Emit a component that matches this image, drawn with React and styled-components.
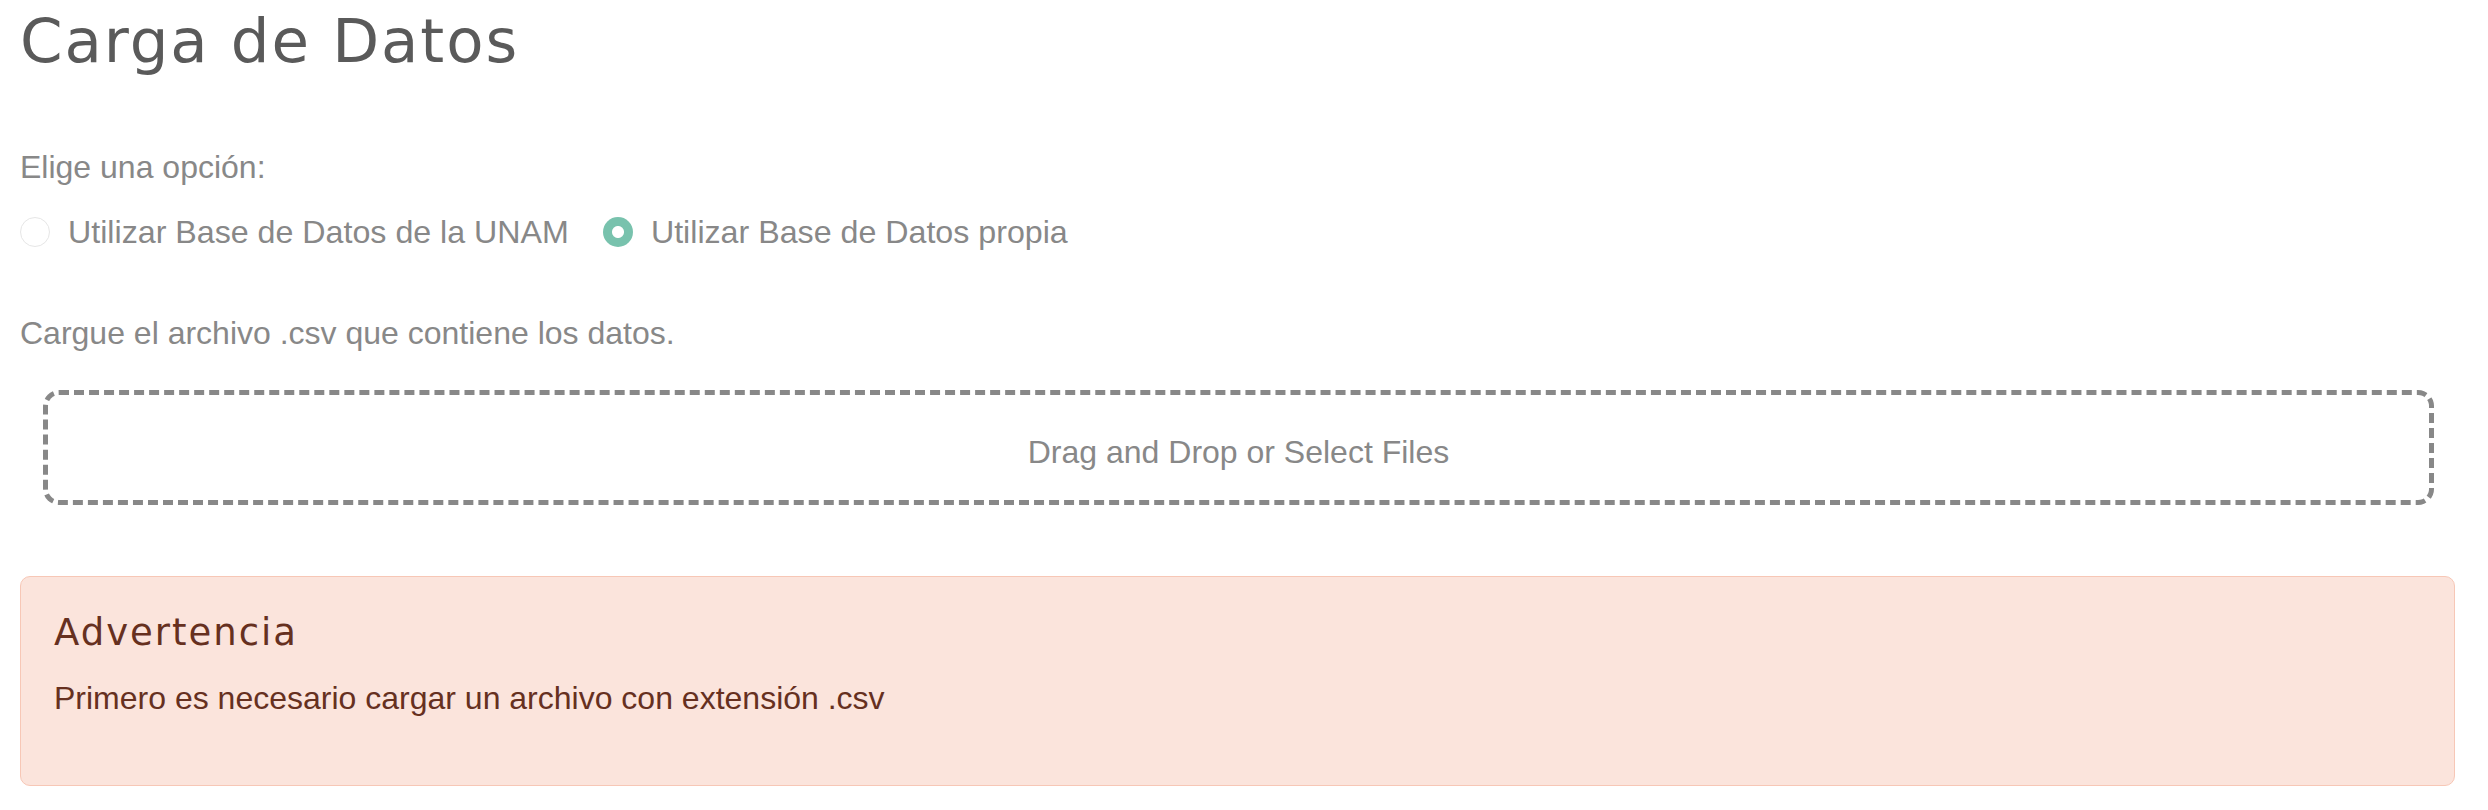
import React, { useState } from "react";
import styled, { createGlobalStyle } from "styled-components";

const GlobalStyle = createGlobalStyle`
  html, body { margin: 0; padding: 0; background: #ffffff; }
  body { font-family: "Liberation Sans", Arial, sans-serif; color: #888888; }
  * { box-sizing: border-box; }
`;

const Page = styled.main`
  display: flex;
  flex-direction: column;
  padding: 0 33px 0 20px;
`;

const Title = styled.h1`
  margin: 0;
  padding-top: 6px;
  height: 76px;
  font-family: "DejaVu Sans", sans-serif;
  font-weight: 400;
  font-size: 61px;
  line-height: 70px;
  letter-spacing: 1.9px;
  color: #5a5a5a;
`;

const Label = styled.div`
  font-size: 32px;
  line-height: 40px;
  color: #888888;
  margin-top: ${(p) => p.$top}px;
`;

const RadioGroup = styled.div`
  display: flex;
  align-items: center;
  gap: 34px;
  margin-top: 25px;
  height: 40px;
`;

const RadioOption = styled.label`
  display: flex;
  align-items: center;
  gap: 18px;
  font-size: 32.2px;
  line-height: 40px;
  color: #888888;
  cursor: pointer;
`;

const RadioDot = styled.span`
  width: 30px;
  height: 30px;
  border-radius: 50%;
  flex: none;
  border: ${(p) => (p.$checked ? "none" : "1.5px solid #e6e6e6")};
  background: ${(p) =>
    p.$checked
      ? "radial-gradient(circle, #ffffff 0 5.5px, #78c2ad 6.5px)"
      : "#ffffff"};
`;

const Dropzone = styled.div`
  margin: 37px 21px 0 23px;
  height: 115px;
  padding-top: 10px;
  border: 5px dashed #888888;
  border-radius: 16px;
  display: flex;
  align-items: center;
  justify-content: center;
  font-size: 32px;
  color: #888888;
`;

const Alert = styled.section`
  margin-top: 71px;
  padding: 31.5px 33px 0 33px;
  background: #fbe4dc;
  border: 1.5px solid #f7c7b6;
  border-radius: 10px;
  color: #66301f;
  height: 210px;
`;

const AlertHeading = styled.h4`
  margin: 0;
  font-family: "DejaVu Sans", sans-serif;
  font-weight: 400;
  font-size: 37px;
  line-height: 48px;
  letter-spacing: 2px;
  color: #66301f;
`;

const AlertText = styled.p`
  margin: 21px 0 0 0;
  font-size: 32px;
  line-height: 40px;
`;

export default function App() {
  const [choice, setChoice] = useState("propia");
  const options = [
    { id: "unam", label: "Utilizar Base de Datos de la UNAM" },
    { id: "propia", label: "Utilizar Base de Datos propia" },
  ];
  return (
    <>
      <GlobalStyle />
      <Page>
        <Title>Carga de Datos</Title>
        <Label $top={71}>Elige una opción:</Label>
        <RadioGroup>
          {options.map((o) => (
            <RadioOption key={o.id} onClick={() => setChoice(o.id)}>
              <RadioDot $checked={choice === o.id} />
              {o.label}
            </RadioOption>
          ))}
        </RadioGroup>
        <Label $top={61}>Cargue el archivo .csv que contiene los datos.</Label>
        <Dropzone>Drag and Drop or Select Files</Dropzone>
        <Alert>
          <AlertHeading>Advertencia</AlertHeading>
          <AlertText>Primero es necesario cargar un archivo con extensión .csv</AlertText>
        </Alert>
      </Page>
    </>
  );
}
